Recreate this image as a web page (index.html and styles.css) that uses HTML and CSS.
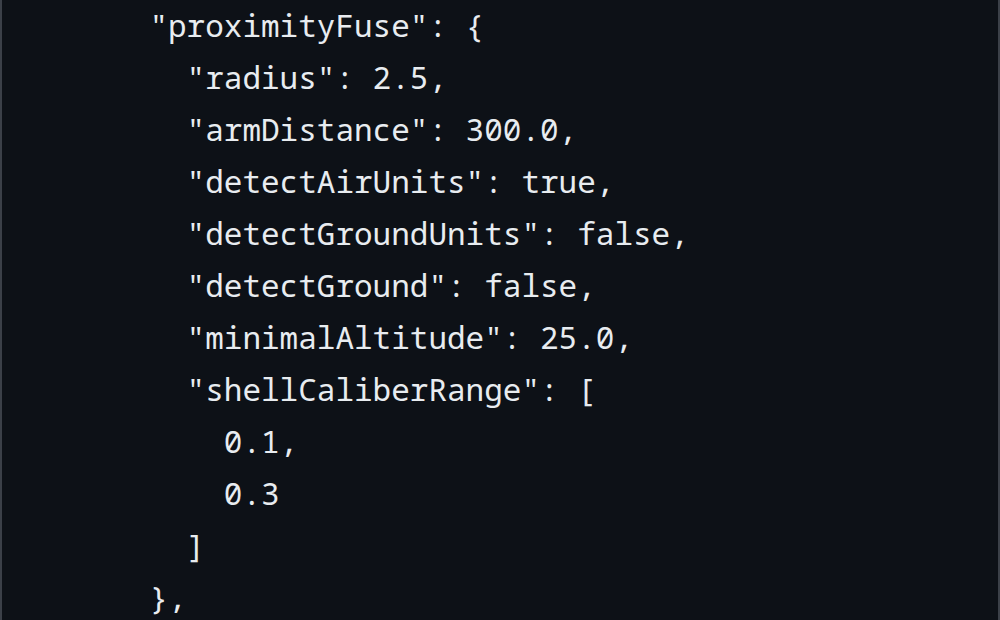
FILE: index.html
```html
<!DOCTYPE html>
<html lang="en">
<head>
<meta charset="utf-8">
<title>proximityFuse</title>
<link rel="stylesheet" href="styles.css">
</head>
<body>
<div class="frame">
<pre class="code"><code>    "proximityFuse": {
      "radius": 2.5,
      "armDistance": 300.0,
      "detectAirUnits": true,
      "detectGroundUnits": false,
      "detectGround": false,
      "minimalAltitude": 25.0,
      "shellCaliberRange": [
        0.1,
        0.3
      ]
    },
  }</code></pre>
</div>
</body>
</html>
```
FILE: styles.css
```css
html, body {
  margin: 0;
  padding: 0;
  height: 100%;
  overflow: hidden;
  background: #0d1117;
}
.frame {
  height: 620px;
  box-sizing: border-box;
  border-left: 2px solid #3b4048;
  border-right: 2px solid #3b4048;
  background: #0d1117;
  overflow: hidden;
}
.code {
  margin: -1px 0 0 0;
  padding: 0 0 0 73px;
  font-family: "Noto Sans Mono", "DejaVu Sans Mono", monospace;
  font-size: 31px;
  line-height: 52px;
  color: #e8ecf0;
  white-space: pre;
}
.code code {
  font-family: inherit;
  line-height: inherit;
}
```
